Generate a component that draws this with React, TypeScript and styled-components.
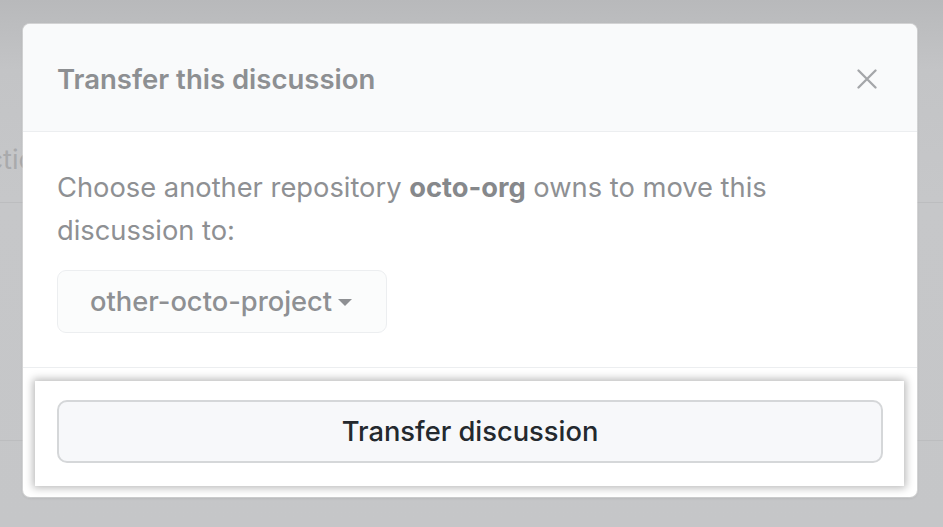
import React from 'react';
import styled, { createGlobalStyle } from 'styled-components';

const GlobalStyle = createGlobalStyle`
  html, body {
    margin: 0;
    padding: 0;
  }
  body {
    font-family: Inter, "Noto Sans", "Liberation Sans", sans-serif;
    -webkit-font-smoothing: antialiased;
  }
`;

function CloseIcon() {
  return (
    <svg width='20' height='20' viewBox='0 0 20 20' fill='none'>
      <path d='M1.5 1.5L18.5 18.5M18.5 1.5L1.5 18.5' stroke='#a4a6a9' strokeWidth='2.3' strokeLinecap='round' />
    </svg>
  );
}

function App() {
  return (
    <>
      <GlobalStyle />
      <Backdrop>
        <PageRow $height={203}>
          <PageText>Sections</PageText>
        </PageRow>
        <PageRow $height={238} />

        <Dialog>
          <Header>
            <Title>Transfer this discussion</Title>
            <CloseButton aria-label='Close'>
              <CloseIcon />
            </CloseButton>
          </Header>

          <Body>
            <Message>
              Choose another repository <strong>octo-org</strong> owns to move this discussion to:
            </Message>
            <RepoSelect>
              other-octo-project
              <Caret />
            </RepoSelect>
          </Body>

          <Footer>
            <Highlight>
              <TransferButton>Transfer discussion</TransferButton>
            </Highlight>
          </Footer>
        </Dialog>
      </Backdrop>
    </>
  );
}

const Backdrop = styled.div`
  position: relative;
  width: 943px;
  height: 527px;
  overflow: hidden;
  background: linear-gradient(180deg, #b8b9bb 0px, #c3c4c6 70px, #c6c7c9 200px, #c5c6c8 100%);
`;

const PageRow = styled.div<{ $height: number }>`
  display: flex;
  align-items: center;
  height: ${(p) => p.$height}px;
  box-sizing: border-box;
  border-bottom: 1px solid #bcbdbf;
`;

const PageText = styled.span`
  margin-left: -46px;
  margin-top: 116px;
  font-size: 27.3px;
  color: #a9aaac;
`;

const Dialog = styled.div`
  position: absolute;
  top: 24px;
  left: 23px;
  width: 894px;
  height: 473px;
  display: flex;
  flex-direction: column;
  border-radius: 7px;
  background: #fff;
  overflow: hidden;
  box-shadow: 0 1px 3px rgba(0, 0, 0, 0.12), 0 0 0 1px rgba(255, 255, 255, 0.4);
`;

const Header = styled.div`
  display: flex;
  align-items: center;
  justify-content: space-between;
  height: 108px;
  padding: 3px 40px 0 34px;
  box-sizing: border-box;
  background: #f9fafb;
  border-bottom: 1.5px solid #eceef0;
  flex-shrink: 0;
`;

const Title = styled.h2`
  margin: 0;
  font-size: 27.5px;
  font-weight: 600;
  color: #8d8f92;
`;

const CloseButton = styled.button`
  display: flex;
  padding: 0;
  border: none;
  background: none;
`;

const Body = styled.div`
  padding: 34px 34px 34px;
  border-bottom: 1.5px solid #eceef0;
`;

const Message = styled.p`
  margin: 0 0 18px;
  max-width: 790px;
  font-size: 27.3px;
  line-height: 43px;
  color: #8e9093;

  strong {
    font-weight: 700;
    color: #86888b;
  }
`;

const RepoSelect = styled.button`
  display: inline-flex;
  align-items: center;
  gap: 6px;
  height: 63px;
  padding: 0 34px 0 32px;
  border: 1.5px solid #eceef0;
  border-radius: 9px;
  background: #fbfcfc;
  font-family: inherit;
  font-size: 27.3px;
  font-weight: 500;
  color: #8e9093;
`;

const Caret = styled.span`
  width: 0;
  height: 0;
  margin-top: 2px;
  border-left: 7px solid transparent;
  border-right: 7px solid transparent;
  border-top: 7px solid #8e9093;
`;

const Footer = styled.div`
  flex: 1;
  padding: 13px 13px 10px 12px;
`;

const Highlight = styled.div`
  display: flex;
  padding: 19px 21px 23px 22px;
  background: #fff;
  box-shadow: 0 0 8px 2px rgba(0, 0, 0, 0.28);
`;

const TransferButton = styled.button`
  flex: 1;
  height: 63px;
  border: 2px solid #d5d7d9;
  border-radius: 10px;
  background: #f7f8fa;
  font-family: inherit;
  font-size: 27.3px;
  font-weight: 500;
  color: #24292e;
`;

export default App;
